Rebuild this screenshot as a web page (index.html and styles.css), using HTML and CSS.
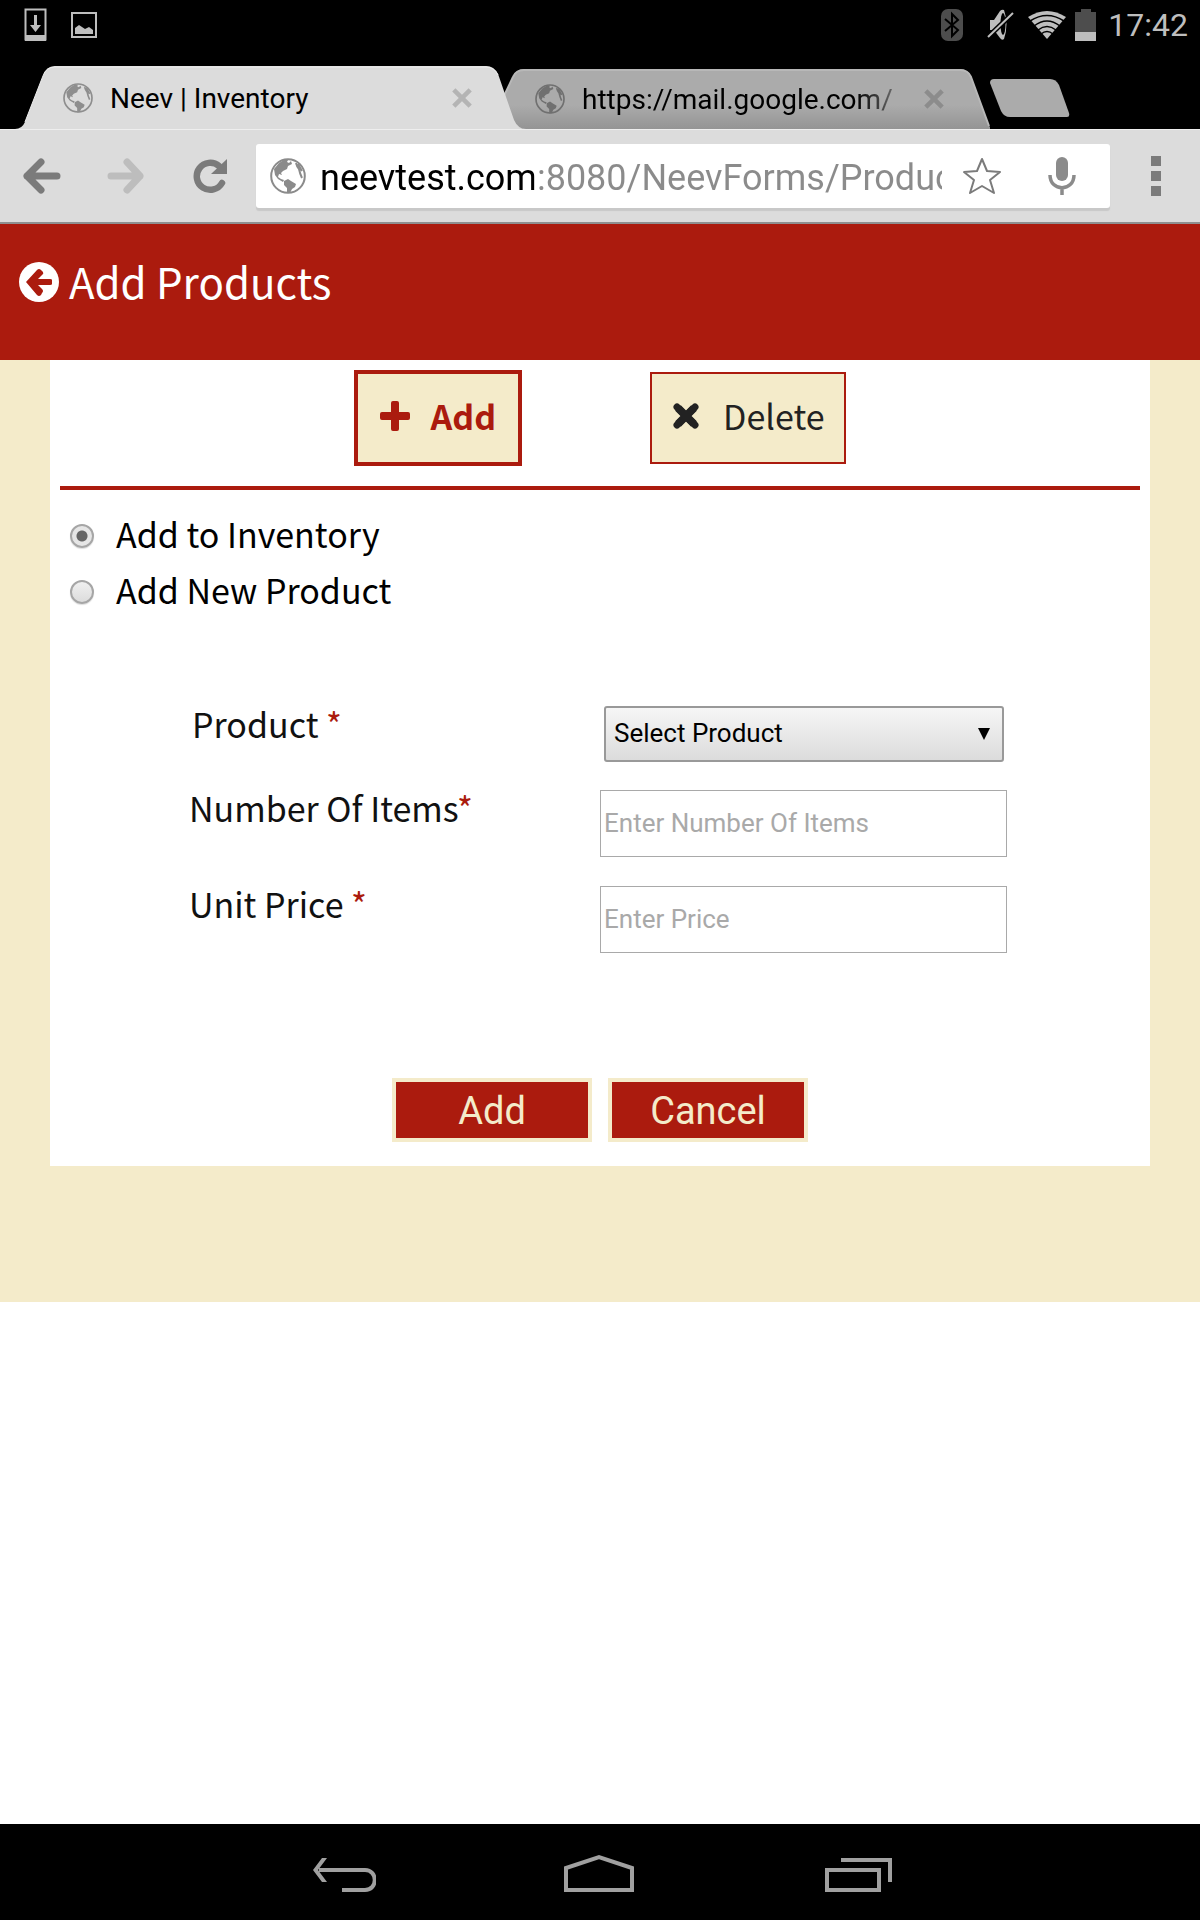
FILE: index.html
```html
<!DOCTYPE html>
<html lang="en">
<head>
<meta charset="utf-8">
<meta name="viewport" content="width=device-width, initial-scale=1">
<title>Neev | Inventory</title>
<link rel="stylesheet" href="styles.css">
</head>
<body>
<svg class="defs" width="0" height="0" aria-hidden="true">
  <symbol id="globe" viewBox="0 0 36 36">
    <circle cx="18" cy="18" r="16.8" fill="none" stroke="currentColor" stroke-width="2"/>
    <path fill="currentColor" d="M4 11 L9 5 L14 2 L18 2 L17 4 L19 5 L21 3 L22 6 L18 8 L17 11 L13 13 L11 15 L12 17 L9 16 L8 19 L11 21 L14 22 L13 24 L8 21 L5 17 Z"/>
    <path fill="currentColor" d="M14 23 L18 21 L21 23 L26 26 L25 29 L22 31 L20 35 L17 35 L17 30 L14 27 Z"/>
    <path fill="none" stroke="currentColor" stroke-width="2" d="M26 5 Q27 9 29 11 Q30 16 32 20 M28 6 L32 13"/>
  </symbol>
  <symbol id="cross" viewBox="0 0 22 22">
    <path d="M2 2 L20 20 M20 2 L2 20" fill="none" stroke="currentColor" stroke-width="5"/>
  </symbol>
</svg>

<header class="status">
  <div class="status-group notes">
    <svg width="24" height="34" viewBox="0 0 24 34"><rect x="1.5" y="1.5" width="20" height="30" fill="none" stroke="#bebebe" stroke-width="2"/><path d="M1 27h21v6H1z M10 7h3v10h4l-5.500 7l-5.500 -7h4z" fill="#bebebe"/></svg>
    <svg width="26" height="26" viewBox="0 0 26 26"><rect x="1" y="1" width="24" height="24" fill="none" stroke="#bebebe" stroke-width="2"/><path d="M4 22V16l4-3 6 4 4-2 4 3v4z" fill="#bebebe"/></svg>
  </div>
  <div class="status-group">
    <svg class="bluetooth" width="22" height="32" viewBox="0 0 22 32"><rect width="22" height="32" rx="7" fill="#4d4d4d"/><path d="M4 10l13 11-6 6V5l6 6L4 22" fill="none" stroke="#000" stroke-width="2"/></svg>
    <svg class="muted" width="28" height="32" viewBox="0 0 28 32"><path d="M3 11h4L13 2Q15 0 17 1Q22 15 17 30Q15 32 13 29L7 21H3z" fill="#bebebe"/><ellipse cx="16" cy="15" rx="2.500" ry="11" fill="#000"/><path d="M1 28L26 4" stroke="#000" stroke-width="5"/><path d="M1 28L26 4" stroke="#bebebe" stroke-width="2"/></svg>
    <svg class="wifi" width="40" height="30" viewBox="0 0 40 30"><path d="M20 29L1 7Q20 -5 39 7z" fill="#bebebe"/><path d="M3 11Q20 0 37 11M7 16Q20 6 33 16M11 20Q20 13 29 20M14 24Q20 19 26 24" fill="none" stroke="#000" stroke-width="1.500"/></svg>
    <svg width="22" height="32" viewBox="0 0 22 32"><path d="M6 0h10v3h5v20H0V3h6z" fill="#4d4d4d"/><path d="M0 23h21v9H0z" fill="#bebebe"/></svg>
    <time class="clock">17:42</time>
  </div>
</header>

<nav class="tabs" aria-label="Browser tabs">
  <div class="tab tab-active">
    <svg class="tab-shape" viewBox="0 0 512 63" preserveAspectRatio="none"><path d="M0 63Q7 63 10 56L28 10Q31 0 40 0H472Q480 0 484 8L500 54Q504 63 512 63z" fill="#dcdcdc"/><path d="M10 56L28 10Q31 1 40 1H472Q480 1 484 9" fill="none" stroke="#eee" stroke-width="1"/></svg>
    <a class="tab-link" href="#inventory"><svg class="tab-icon" width="30" height="30"><use href="#globe"/></svg><span class="tab-title">Neev | Inventory</span></a>
    <button class="tab-close" type="button" aria-label="Close Neev tab"><svg width="20" height="20"><use href="#cross"/></svg></button>
  </div>
  <div class="tab tab-other">
    <svg class="tab-shape" viewBox="0 0 488 60" preserveAspectRatio="none"><defs><linearGradient id="shade" x2="0" y2="1"><stop offset=".6" stop-color="#ababab"/><stop offset="1" stop-color="#949494"/></linearGradient></defs><path d="M0 27L10 8Q13 0 21 0H458Q466 0 469 8L486 54Q488 60 491 60H20Q13 60 10 52z" fill="url(#shade)"/><path d="M1 27L10 8Q13 1 21 1H458Q466 1 469 8L487 57" fill="none" stroke="#b8b8b8" stroke-width="2"/></svg>
    <a class="tab-link" href="https://mail.google.com/"><svg class="tab-icon" width="30" height="30"><use href="#globe"/></svg><span class="tab-title faded">https://mail.google.com/</span></a>
    <button class="tab-close" type="button" aria-label="Close mail tab"><svg width="20" height="20"><use href="#cross"/></svg></button>
  </div>
  <button class="new-tab" type="button" aria-label="New tab"><svg width="80" height="38" viewBox="0 0 80 38"><path d="M4 0H60Q66 0 69 6L79 34Q80 38 77 38H20Q14 38 11 32L0 4Q0 0 4 0z" fill="#ababab"/></svg></button>
</nav>

<div class="toolbar">
  <button class="tool" type="button" aria-label="Back"><svg width="38" height="36" viewBox="0 0 38 36"><path d="M18 4L4 18L18 32M4 18H34" fill="none" stroke="#7b7b7b" stroke-width="7" stroke-linecap="round" stroke-linejoin="round"/></svg></button>
  <button class="tool" type="button" aria-label="Forward"><svg width="38" height="36" viewBox="0 0 38 36"><path d="M20 4L33 18L20 32M33 18H4" fill="none" stroke="#bdbdbd" stroke-width="7" stroke-linecap="round" stroke-linejoin="round"/></svg></button>
  <button class="tool" type="button" aria-label="Reload"><svg width="38" height="36" viewBox="0 0 38 36"><path d="M31 25A13.500 13.500 0 1 1 28 8" fill="none" stroke="#7b7b7b" stroke-width="6.500" stroke-linecap="round"/><path d="M36 1V16H20z" fill="#7b7b7b"/></svg></button>
  <div class="address">
    <svg class="address-globe" width="36" height="36"><use href="#globe"/></svg>
    <input class="url" type="text" aria-label="Address" value="neevtest.com:8080/NeevForms/Product">
    <button class="icon-button" type="button" aria-label="Bookmark"><svg width="40" height="38" viewBox="0 0 40 38"><path d="M20 2L25 14L38 15L28 23L32 36L20 29L8 36L12 23L2 15L15 14z" fill="none" stroke="#7b7b7b" stroke-width="2" stroke-linejoin="round"/></svg></button>
    <button class="icon-button" type="button" aria-label="Voice search"><svg width="28" height="38" viewBox="0 0 28 38"><rect x="8" y="0" width="12" height="24" rx="6" fill="#8b8b8b"/><path d="M2 18C2 35 26 35 26 18M14 30V38" fill="none" stroke="#8b8b8b" stroke-width="3.500"/></svg></button>
  </div>
  <button class="menu" type="button" aria-label="Menu"><svg width="10" height="40" viewBox="0 0 10 40"><path d="M0 0h10v10H0zM0 15h10v10H0zM0 30h10v10H0z" fill="#7b7b7b"/></svg></button>
</div>

<main class="page" id="inventory">
  <header class="page-head">
    <a class="back-link" href="#back" aria-label="Back"><svg width="40" height="40" viewBox="0 0 40 40"><circle cx="20" cy="20" r="20" fill="#fff"/><path d="M7 20L18 8Q20 6 22 8L24 10Q25 12 23 13L19 17H31Q33 17 33 18V22Q33 23 31 23H19L23 27Q25 29 23 31L22 33Q20 35 18 33z" fill="#ab1b0e"/></svg></a>
    <h1 class="title">Add Products</h1>
  </header>
  <div class="backdrop">
    <form class="panel">
      <div class="modes">
        <button class="mode mode-current" type="button"><svg width="30" height="30" viewBox="0 0 30 30"><path d="M13 0h4q2 0 2 2v9h9q2 0 2 2v4q0 2-2 2h-9v9q0 2-2 2h-4q-2 0-2-2v-9H2q-2 0-2-2v-4q0-2 2-2h9V2q0-2 2-2z" fill="currentColor"/></svg>Add</button>
        <button class="mode" type="button"><svg width="26" height="26" viewBox="0 0 26 26"><path d="M5 5L21 21M21 5L5 21" stroke="currentColor" stroke-width="8"/><path d="M4 4L22 22M22 4L4 22" stroke="currentColor" stroke-width="7" stroke-linecap="round"/></svg>Delete</button>
      </div>
      <div class="choices">
        <label class="choice"><input class="radio" type="radio" name="kind" checked><span class="choice-name">Add to Inventory</span></label>
        <label class="choice"><input class="radio" type="radio" name="kind"><span class="choice-name">Add New Product</span></label>
      </div>
      <div class="fields">
        <label class="field-label indent" for="product">Product <span class="required">*</span></label>
        <select class="select" id="product"><option>Select Product</option></select>
        <label class="field-label" for="count">Number Of Items<span class="required">*</span></label>
        <input class="text" id="count" type="text" placeholder="Enter Number Of Items">
        <label class="field-label" for="price">Unit Price <span class="required">*</span></label>
        <input class="text" id="price" type="text" placeholder="Enter Price">
      </div>
      <div class="actions">
        <button class="action" type="button">Add</button>
        <button class="action" type="button">Cancel</button>
      </div>
    </form>
  </div>
</main>

<nav class="system" aria-label="System">
  <button class="system-button" type="button" aria-label="Back"><svg width="64" height="40" viewBox="0 0 64 40"><path d="M30 36H53C66 36 66 16 53 16H7" fill="none" stroke="#a0a0a0" stroke-width="4"/><path d="M15 4h-5L1 16L10 28h5L6 16z" fill="#a0a0a0"/></svg></button>
  <button class="system-button" type="button" aria-label="Home"><svg width="72" height="40" viewBox="0 0 72 40"><path d="M3 36V14L36 3L69 14V36z" fill="none" stroke="#a0a0a0" stroke-width="4"/></svg></button>
  <button class="system-button" type="button" aria-label="Recent apps"><svg width="72" height="40" viewBox="0 0 72 40"><path d="M5 16H57V36H5zM19 6H68V28" fill="none" stroke="#a0a0a0" stroke-width="4"/></svg></button>
</nav>
</body>
</html>
```
FILE: styles.css
```css
* { box-sizing: border-box; }

body {
  margin: 0;
  min-height: 100vh;
  display: flex;
  flex-direction: column;
  background: #fff;
  color: #000;
  font-family: Roboto, sans-serif;
}

button, input, select { font: inherit; color: inherit; margin: 0; }
button { border: 0; padding: 0; background: none; cursor: pointer; }
svg { display: block; flex: none; }
a { color: inherit; text-decoration: none; }
.defs { position: absolute; }

/* Status bar */
.status {
  display: flex;
  justify-content: space-between;
  height: 66px;
  padding: 0 12px 16px 24px;
  background: #000;
}
.status-group { display: flex; align-items: center; }
.notes { gap: 23px; }
.bluetooth { margin-right: 24px; }
.muted { margin-right: 12px; }
.wifi { margin-right: 8px; }
.clock { margin-left: 11px; font-size: 32px; line-height: 52px; color: #bebebe; }

/* Browser tabs */
.tabs {
  display: flex;
  align-items: flex-end;
  height: 63px;
  padding-left: 15px;
  background: #000;
}
.tab { display: grid; grid-template-columns: minmax(0, 1fr) 40px; height: 60px; align-items: center; }
.tab-active { z-index: 1; height: 63px; width: 511px; }
.tab-other { width: 487px; margin-left: -23px; }
.tab-shape { grid-area: 1 / 1 / 2 / 3; width: 100%; height: 100%; }
.tab-link {
  grid-area: 1 / 1;
  display: flex;
  align-items: center;
  gap: 17px;
  padding-left: 48px;
  font-size: 28px;
  line-height: 32px;
  white-space: nowrap;
}
.tab-title { padding-top: 2px; }
.tab-other .tab-link { padding-left: 32px; }
.tab-icon { color: #8e8e8e; }
.tab-other .tab-icon { color: #707070; }
.tab-close { grid-area: 1 / 2; width: 40px; margin-left: -44px; color: #b4b4b4; }
.tab-close svg { margin: 0 auto; }
.tab-other .tab-close { margin-left: -36px; color: #8c8c8c; }
.faded {
  -webkit-mask-image: linear-gradient(to right, #000 88%, rgba(0, 0, 0, .4));
  mask-image: linear-gradient(to right, #000 88%, rgba(0, 0, 0, .4));
}
.new-tab { align-self: center; }

/* Toolbar */
.toolbar {
  display: flex;
  align-items: center;
  height: 95px;
  padding-right: 39px;
  background: #dcdcdc;
  border-top: 1px solid #eee;
  border-bottom: 2px solid #8f8f8f;
}
.tool { width: 84px; padding-left: 23px; }
.address {
  flex: 1;
  display: flex;
  align-items: center;
  height: 64px;
  margin: 0 41px 0 4px;
  padding: 0 34px 0 14px;
  border-radius: 3px;
  background: #fff;
  box-shadow: 0 3px 1px #c8c8c8;
}
.address-globe { margin-right: 14px; color: #8b8b8b; }
.url {
  flex: 1;
  min-width: 0;
  height: 52px;
  margin-right: 20px;
  padding: 4px 0 0;
  border: 0;
  outline: 0;
  font-size: 36px;
  color: transparent;
  background: linear-gradient(to right, #000 214px, #8b8b8b 214px) text;
  -webkit-background-clip: text;
}
.icon-button + .icon-button { margin-left: 46px; }

/* Page */
.page { flex: 1; font-family: "Noto Sans CJK SC", sans-serif; }
.page-head {
  display: flex;
  align-items: center;
  gap: 10px;
  height: 136px;
  padding: 0 19px 20px;
  background: #ab1b0e;
  color: #fff;
}
.title { margin: 0; padding-bottom: 2px; font-size: 42px; line-height: 48px; font-weight: 400; }
.backdrop { padding: 0 50px 136px; background: #f4ebca; }
.panel { padding: 10px 10px 24px; background: #fff; }

.modes {
  display: flex;
  align-items: center;
  justify-content: center;
  gap: 128px;
  padding-bottom: 20px;
  border-bottom: 4px solid #ab1b0e;
}
.mode {
  display: flex;
  align-items: center;
  gap: 24px;
  height: 92px;
  padding: 0 19px 4px 21px;
  border: 2px solid #ab1b0e;
  background: #f4ebca;
  color: #222;
  font-size: 34px;
  line-height: 48px;
}
.mode-current {
  height: 96px;
  gap: 20px;
  padding: 0 22px 4px;
  border-width: 4px;
  color: #ab1b0e;
  font-weight: 700;
}

.choices { padding: 18px 10px 0; }
.choice { display: flex; align-items: center; gap: 22px; height: 56px; }
.choice-name { padding-bottom: 4px; font-size: 34px; line-height: 40px; }
.radio {
  appearance: none;
  width: 24px;
  height: 24px;
  border: 2px solid #a6a6a6;
  border-radius: 50%;
  background: linear-gradient(#f0f0f0, #dcdcdc);
  box-shadow: 0 1px 1px #ddd;
}
.radio:checked { background: radial-gradient(circle, #666 5px, #e6e6e6 6px); }

.fields {
  display: grid;
  grid-template-columns: 1fr 1fr;
  gap: 28px 0;
  max-width: 822px;
  margin: 86px auto 0;
}
.field-label { padding-top: 2px; font-size: 34px; line-height: 32px; color: #111; }
.indent { padding-left: 3px; }
.required { color: #ab1b0e; }
.select {
  appearance: none;
  width: 400px;
  height: 56px;
  margin-left: 4px;
  padding: 0 8px 2px;
  border: 2px solid #999;
  border-radius: 3px;
  background: url("data:image/svg+xml,%3Csvg xmlns='http://www.w3.org/2000/svg' width='12' height='12'%3E%3Cpath d='M0 0H12L6 12z'/%3E%3C/svg%3E") no-repeat right 12px center, linear-gradient(#f6f6f6, #dcdcdc);
  font-family: Roboto, sans-serif;
  font-size: 26px;
}
.text {
  width: 407px;
  height: 67px;
  margin-bottom: 1px;
  padding: 0 3px 1px;
  border: 1px solid #a9a9a9;
  background: #fff;
  font-family: Roboto, sans-serif;
  font-size: 26px;
}
.text::placeholder { color: #a9a9a9; }

.actions { display: flex; justify-content: center; gap: 16px; margin-top: 124px; }
.action {
  width: 200px;
  height: 64px;
  padding-top: 2px;
  border: 4px solid #f4ebca;
  background: #ab1b0e;
  color: #f4ebca;
  font-family: Roboto, sans-serif;
  font-size: 38px;
  line-height: 48px;
}

/* System navigation */
.system {
  display: flex;
  align-items: center;
  justify-content: center;
  gap: 187px;
  height: 96px;
  padding: 4px 0 0 6px;
  background: #000;
}
```
